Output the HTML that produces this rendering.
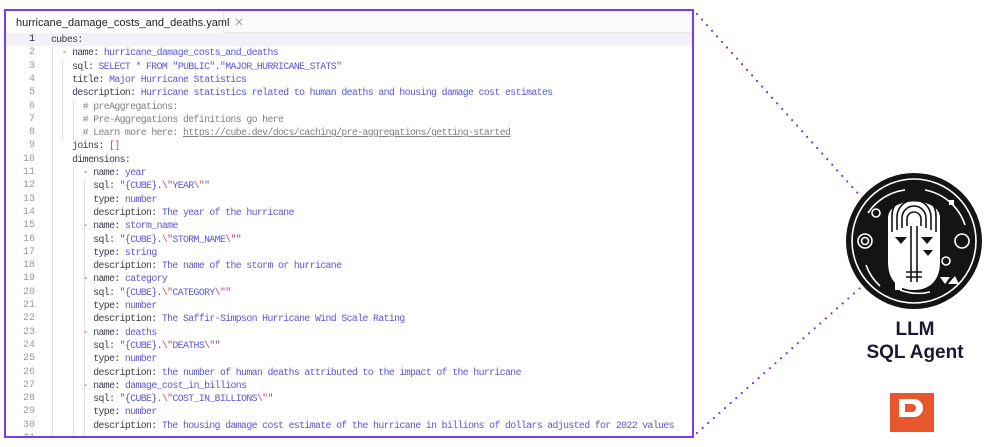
<!DOCTYPE html>
<html><head><meta charset="utf-8"><style>
*{margin:0;padding:0;box-sizing:border-box}
body{width:1000px;height:447px;background:#fff;position:relative;overflow:hidden;font-family:"Liberation Sans",sans-serif}
#panel{position:absolute;left:4px;top:9px;width:690px;height:429px;border:2px solid #7c3aed;overflow:hidden;background:#fff}
#tabbar{position:absolute;left:0;top:0;width:100%;height:22px;background:#fafafa;border-bottom:1px solid #e6e6e6}
#tab{position:absolute;left:0;top:0;width:218px;height:22px;background:#fff;border-right:1px solid #e6e6e6;font-size:11px;color:#222;padding:5px 0 0 10px}
#tab span{color:#999;margin-left:5px}
#hl{position:absolute;left:0;top:22px;width:100%;height:13.3px;background:#f1f2f7}
.ln{position:absolute;left:0;width:29px;text-align:right;font-family:"Liberation Mono",monospace;font-size:10px;color:#9a9a9a;line-height:13.3px}
.c{position:absolute;left:45px;font-family:"Liberation Mono",monospace;font-size:9.8px;letter-spacing:-0.6px;white-space:pre;line-height:13.3px;color:#3b3b48}
.v{color:#5b55d6}.r{color:#d2405e}.g{color:#808080}.u{color:#808080;text-decoration:underline}
.gd{position:absolute;width:1px;background:#e0e0e0}
#t1{position:absolute;left:862px;top:318px;width:106px;text-align:center;font-weight:bold;font-size:19px;color:#1a1a2e;line-height:23px}
</style></head><body>
<div id="panel">
<div id="tabbar"><div id="tab">hurricane_damage_costs_and_deaths.yaml<span>✕</span></div></div>
<div id="hl"></div>
<div class="gd" style="left:46px;top:36px;height:400px"></div>
<div class="gd" style="left:56px;top:49px;height:80px"></div>
<div class="gd" style="left:67px;top:89px;height:40px"></div>
<div class="gd" style="left:67px;top:156px;height:280px"></div>
<div class="gd" style="left:78px;top:169px;height:267px"></div>
<div id="code"></div>
</div>
<svg width="1000" height="447" style="position:absolute;left:0;top:0">
<g stroke="#7c2ff0" stroke-width="2.2" stroke-linecap="round" stroke-dasharray="0 7.5" fill="none">
<line x1="697" y1="14" x2="880" y2="218"/>
<line x1="697" y1="433" x2="878" y2="272"/>
</g>
<circle cx="914" cy="241" r="68" fill="#141414"/>
<g fill="none" stroke="#fff" stroke-width="1.6">
<circle cx="914" cy="241" r="62"/>
<path d="M868 213 A52 52 0 0 1 905 190"/>
<path d="M925 190 A52 52 0 0 1 965 225"/>
<path d="M866 265 A52 52 0 0 0 880 286"/>
<path d="M900 290 A52 52 0 0 0 930 292"/>
<circle cx="865" cy="241" r="7"/><circle cx="865" cy="241" r="3.5"/>
<circle cx="962" cy="241" r="7"/>
<circle cx="876" cy="213" r="4"/>
<circle cx="946" cy="261" r="4"/>
<circle cx="901" cy="258" r="3"/>
</g>
<path d="M888 218 C888 196 940 196 940 218 L940 262 C940 282 928 290 914 290 C900 290 888 282 888 262 Z" fill="#fff"/>
<g fill="none" stroke="#141414" stroke-width="1.6">
<path d="M892 232 V216 A22 22 0 0 1 936 216 V232"/>
<path d="M897 230 V217 A17 17 0 0 1 931 217 V230"/>
<path d="M902 228 V218 A12 12 0 0 1 926 218 V228"/>
<path d="M907 226 V219 A7 7 0 0 1 921 219 V226"/>
<path d="M911 226 V282 M917 226 V282"/>
<path d="M906 272 H922 M906 277 H922"/>
</g>
<path d="M895 237 L907 237 L901 244 Z M921 237 L933 237 L927 244 Z M923 250 L933 250 L928 256 Z" fill="#141414"/>
<rect x="895" y="283" width="7" height="7" fill="#fff"/>
<rect x="949" y="200" width="5" height="5" fill="#fff"/>
<path d="M940 277 L950 277 L945 284 Z M948 284 L955 276 L959 284 Z" fill="#fff"/>
<rect x="890" y="393" width="44" height="39" fill="#e8562e"/>
<path d="M899 399 H914 A9 9 0 0 1 914 417 H899 Z" fill="#fff"/>
<path d="M905 404 H912 A4 4 0 0 1 912 412 H905 Z" fill="#e8562e"/>
</svg>
<div id="t1">LLM<br>SQL Agent</div>
<script>
var L=[
'cubes:',
'  <span class="r">-</span> name: <span class="v">hurricane_damage_costs_and_deaths</span>',
'    sql: <span class="v">SELECT * FROM "PUBLIC"."MAJOR_HURRICANE_STATS"</span>',
'    title: <span class="v">Major Hurricane Statistics</span>',
'    description: <span class="v">Hurricane statistics related to human deaths and housing damage cost estimates</span>',
'      <span class="g"># preAggregations:</span>',
'      <span class="g"># Pre-Aggregations definitions go here</span>',
'      <span class="g"># Learn more here: </span><span class="u">https://cube.dev/docs/caching/pre-aggregations/getting-started</span>',
'    joins: <span class="r">[]</span>',
'    dimensions:',
'      <span class="r">-</span> name: <span class="v">year</span>',
'        sql: <span class="v">"{CUBE}.</span><span class="r">\\"</span><span class="v">YEAR</span><span class="r">\\"</span><span class="v">"</span>',
'        type: <span class="v">number</span>',
'        description: <span class="v">The year of the hurricane</span>',
'      <span class="r">-</span> name: <span class="v">storm_name</span>',
'        sql: <span class="v">"{CUBE}.</span><span class="r">\\"</span><span class="v">STORM_NAME</span><span class="r">\\"</span><span class="v">"</span>',
'        type: <span class="v">string</span>',
'        description: <span class="v">The name of the storm or hurricane</span>',
'      <span class="r">-</span> name: <span class="v">category</span>',
'        sql: <span class="v">"{CUBE}.</span><span class="r">\\"</span><span class="v">CATEGORY</span><span class="r">\\"</span><span class="v">"</span>',
'        type: <span class="v">number</span>',
'        description: <span class="v">The Saffir-Simpson Hurricane Wind Scale Rating</span>',
'      <span class="r">-</span> name: <span class="v">deaths</span>',
'        sql: <span class="v">"{CUBE}.</span><span class="r">\\"</span><span class="v">DEATHS</span><span class="r">\\"</span><span class="v">"</span>',
'        type: <span class="v">number</span>',
'        description: <span class="v">the number of human deaths attributed to the impact of the hurricane</span>',
'      <span class="r">-</span> name: <span class="v">damage_cost_in_billions</span>',
'        sql: <span class="v">"{CUBE}.</span><span class="r">\\"</span><span class="v">COST_IN_BILLIONS</span><span class="r">\\"</span><span class="v">"</span>',
'        type: <span class="v">number</span>',
'        description: <span class="v">The housing damage cost estimate of the hurricane in billions of dollars adjusted for 2022 values</span>',
''];
var h='';
for(var i=0;i<31;i++){var t=22+i*13.3;
h+='<div class="ln" style="top:'+t+'px;'+(i==0?'color:#222':'')+'">'+(i+1)+'</div><div class="c" style="top:'+t+'px">'+L[i]+'</div>';}
document.getElementById('code').innerHTML=h;
</script>
</body></html>
